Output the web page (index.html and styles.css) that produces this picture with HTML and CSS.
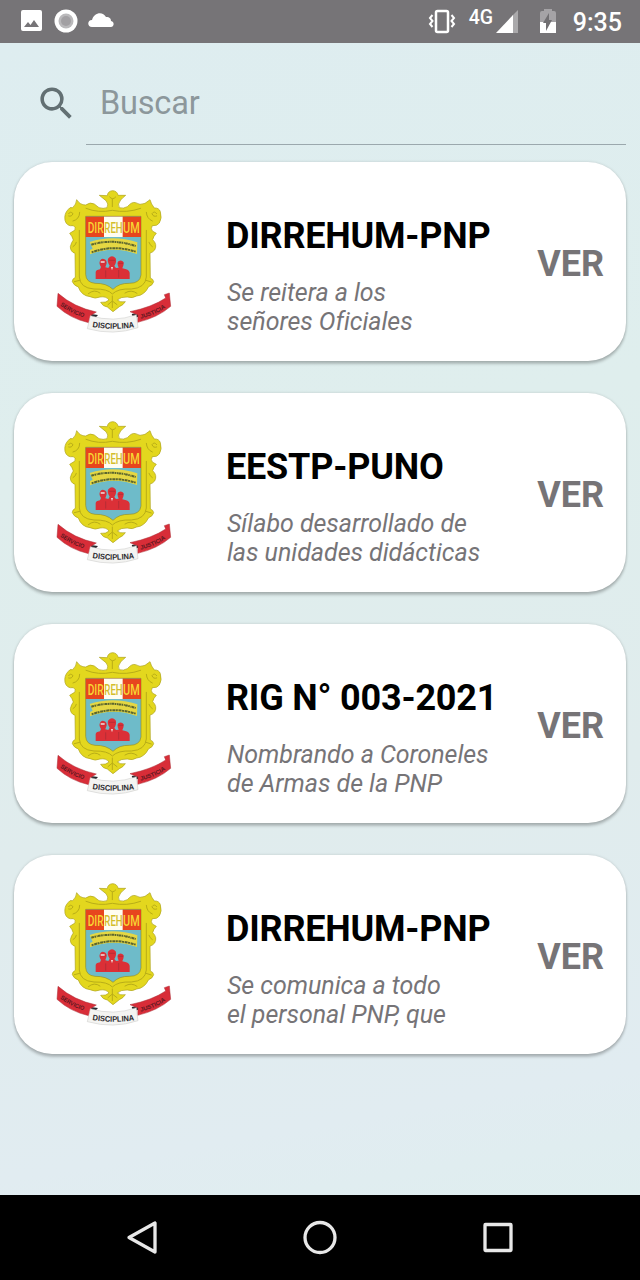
FILE: index.html
```html
<!DOCTYPE html>
<html lang="es">
<head>
    <meta charset="UTF-8">
    <meta name="viewport" content="width=device-width, initial-scale=1.0">
    <title>DIRREHUM</title>
    <link rel="stylesheet" href="styles.css">
</head>
<body>
    <header class="status-bar">
        <svg class="status-left" width="120" height="42" viewBox="0 0 120 42">
            <path fill="#fff" fill-rule="evenodd" d="M23 10 H40 Q42 10 42 12 V29 Q42 31 40 31 H23 Q21 31 21 29 V12 Q21 10 23 10 Z M24 27 H39 L34 20 L30.5 25 L28 22 Z"/>
            <circle cx="66" cy="21" r="11.5" fill="#fff"/>
            <circle cx="66" cy="21" r="7.5" fill="#bab9bb"/>
            <circle cx="66" cy="21" r="5" fill="#a2a0a3"/>
            <path fill="#fff" d="M92 27 C87 27 87 20 92 20 C94 12 103 11 106 17 C110 17 111 19 111 21 C115 22 114 27 111 27 Z"/>
        </svg>
        <div class="status-right">
            <svg width="28" height="42" viewBox="0 0 28 42" fill="none" stroke="#fff" stroke-width="2">
                <rect x="8" y="11" width="12" height="21" rx="1.5" stroke-width="2.5"/>
                <path d="M4.500 15 L2 18 L4.500 21 L2 24 L4.500 27 M23.500 15 L26 18 L23.500 21 L26 24 L23.500 27"/>
            </svg>
            <span class="network">4G</span>
            <svg width="22" height="42" viewBox="0 0 22 42">
                <path fill="#aaa9ab" d="M22 10 V33 H16 V16 Z"/>
                <path fill="#fff" d="M0 33 L17 15 V33 Z"/>
            </svg>
            <svg class="battery" width="16" height="42" viewBox="0 0 16 42">
                <path fill="#a5a3a6" d="M0 13 Q0 11 2 11 H4 V9 H12 V11 H14 Q16 11 16 13 V23 H0 Z"/>
                <path fill="#fff" d="M0 22 H16 V33 H0 Z"/>
                <path fill="#716f72" d="M9 13 V20 H12 L6 31 V23 H3 Z"/>
            </svg>
            <span class="clock">9:35</span>
        </div>
    </header>

    <main class="content">
        <div class="search">
            <svg class="search-icon" width="43" height="43" viewBox="0 0 24 24">
                <path d="M15.5 14h-.79l-.28-.27A6.471 6.471 0 0 0 16 9.5 6.5 6.5 0 1 0 9.5 16c1.61 0 3.09-.59 4.23-1.57l.27.28v.79l5 4.99L20.49 19l-4.99-5zm-6 0C7.01 14 5 11.99 5 9.5S7.01 5 9.5 5 14 7.01 14 9.5 11.99 14 9.5 14z"/>
            </svg>
            <input class="search-input" type="text" placeholder="Buscar">
        </div>

        <div class="card-list">
            <article class="card">
                <svg class="logo" viewBox="0 0 450 480">
                    <!-- Crest, reused by the other cards -->
                    <g id="escudo">
                        <path fill="#e3d71e" stroke="#aaa018" stroke-width="2" stroke-linejoin="round" d="M217 29 C227 29 234 36 234 43 L257 43 Q247 51 242 57 Q231 70 238 80 Q250 84 262 77 Q276 61 287 65 Q299 74 315 67 L330 56 Q333 69 343 81 Q357 80 361 92 Q367 112 358 126 Q351 136 337 134 Q331 143 337 150 L349 157 Q340 166 338 176 Q353 190 344 207 Q337 215 330 216 L331 291 Q340 294 341 302 Q338 313 326 317 Q313 343 290 345 Q277 353 262 348 Q242 347 232 357 Q240 365 256 362 Q250 372 238 377 L219 392 L202 378 Q188 376 182 364 Q198 366 207 357 Q199 345 180 348 Q166 355 150 347 Q124 344 115 318 Q102 314 97 302 Q96 294 106 289 L105 217 Q91 212 91 197 Q94 184 100 177 Q97 166 89 157 L105 147 Q108 138 100 134 Q80 137 75 118 Q72 98 84 86 Q89 77 98 80 Q109 70 110 56 Q120 72 137 72 Q151 62 163 69 L177 80 Q190 84 201 80 Q207 69 198 59 L178 43 L202 44 Q203 31 217 29 Z"/>
                        <g fill="none" stroke="#b8ad18" stroke-width="3" stroke-linecap="round">
                            <path d="M138 82 Q175 97 217 88 Q260 97 302 82"/>
                            <path d="M86 98 Q91 89 99 98 Q95 108 86 105 M99 120 Q119 115 119 94 M350 98 Q343 88 336 98 Q340 109 350 105 M337 120 Q320 113 319 94"/>
                            <path d="M118 148 V288 Q120 321 162 324 Q203 323 217 339 Q234 322 274 324 Q316 321 319 288 V148"/>
                            <path d="M145 338 Q163 323 180 336 M255 336 Q274 324 291 337 M217 345 V380 M204 371 L217 360 L231 371"/>
                            <path d="M209 48 Q218 59 227 48 M217 55 V77 M99 197 Q108 192 109 184 M337 197 Q329 192 327 184 M103 302 L119 298 M334 303 L318 298"/>
                        </g>
                        <path fill="#6ebbc9" stroke="#948e27" stroke-width="2" d="M137 106 H303 V282 Q300 307 268 307 Q237 306 219 325 Q199 306 165 307 Q138 304 137 280 Z"/>
                        <rect x="137" y="107" width="166" height="61" fill="#e7451e"/>
                        <rect x="192" y="107" width="56" height="61" fill="#fffdf0"/>
                        <g class="escudo-name">
                            <text x="143" y="155" textLength="48" lengthAdjust="spacingAndGlyphs" fill="#f7d633">DIR</text>
                            <text x="193" y="155" textLength="55" lengthAdjust="spacingAndGlyphs" fill="#d3bd2b">REH</text>
                            <text x="249" y="155" textLength="50" lengthAdjust="spacingAndGlyphs" fill="#f7d633">UM</text>
                        </g>
                        <path fill="#e5d743" d="M149 183 Q219 160 292 184 L291 219 Q219 193 150 220 L150 207 L158 203 Z"/>
                        <g fill="none" stroke="#5c662e" stroke-width="6">
                            <path stroke-dasharray="8 1.5 5 2 3 1" d="M154 191 Q219 172 287 195"/>
                            <path stroke-dasharray="6 2 9 1.5" d="M155 214 Q219 190 287 212"/>
                        </g>
                        <path fill="#db3037" d="M167 294 V274 Q167 267 180 265 L183 258 Q176 247 180 239 Q184 232 191 234 Q201 236 200 247 L196 259 L205 261 L209 254 Q200 241 205 232 Q216 219 227 232 Q231 243 223 255 L228 261 L236 260 Q229 244 236 240 Q245 235 251 244 Q252 253 247 262 Q267 265 269 275 V294 Z"/>
                        <path fill="none" stroke="#a62c35" stroke-width="2" d="M181 245 H197 M207 238 H225 M235 247 H250 M197 268 V290 M236 267 V290"/>
                        <path fill="#f1e5e3" d="M182 241 H194 V245 H182 Z M213 258 H219 L216 268 Z"/>
                        <path fill="#24262c" d="M152 399 L174 402 L163 414 L146 408 Z M275 399 L296 395 L298 407 L280 410 Z"/>
                        <path fill="#d82d38" stroke="#a82a32" stroke-width="1.5" d="M54 337 Q102 379 169 393 L153 403 L157 414 L146 425 Q91 413 51 376 Z"/>
                        <path fill="#d82d38" stroke="#a82a32" stroke-width="1.5" d="M270 392 Q337 378 377 351 L373 341 L388 336 L392 376 Q353 410 293 424 L294 402 Z"/>
                        <path fill="#f4f4f2" stroke="#c6c6c4" stroke-width="1.5" d="M151 404 Q220 426 289 401 L294 440 Q220 465 142 443 Z"/>
                        <path id="ribbonLeft" fill="none" d="M60 373 Q99 402 145 413"/>
                        <path id="ribbonMiddle" fill="none" d="M157 438 Q220 449 288 438"/>
                        <path id="ribbonRight" fill="none" d="M302 413 Q349 402 390 371"/>
                        <g class="escudo-motto">
                            <text class="motto-side"><textPath href="#ribbonLeft" textLength="80" lengthAdjust="spacingAndGlyphs">SERVICIO</textPath></text>
                            <text class="motto-main"><textPath href="#ribbonMiddle" textLength="127" lengthAdjust="spacingAndGlyphs">DISCIPLINA</textPath></text>
                            <text class="motto-side"><textPath href="#ribbonRight" textLength="82" lengthAdjust="spacingAndGlyphs">JUSTICIA</textPath></text>
                        </g>
                    </g>
                </svg>
                <div class="card-text">
                    <h2>DIRREHUM-PNP</h2>
                    <p>Se reitera a los<br>señores Oficiales</p>
                </div>
                <a class="ver">VER</a>
            </article>
            <article class="card">
                <svg class="logo" viewBox="0 0 450 480"><use href="#escudo"/></svg>
                <div class="card-text">
                    <h2>EESTP-PUNO</h2>
                    <p>Sílabo desarrollado de<br>las unidades didácticas</p>
                </div>
                <a class="ver">VER</a>
            </article>
            <article class="card">
                <svg class="logo" viewBox="0 0 450 480"><use href="#escudo"/></svg>
                <div class="card-text">
                    <h2>RIG N° 003-2021</h2>
                    <p>Nombrando a Coroneles<br>de Armas de la PNP</p>
                </div>
                <a class="ver">VER</a>
            </article>
            <article class="card">
                <svg class="logo" viewBox="0 0 450 480"><use href="#escudo"/></svg>
                <div class="card-text">
                    <h2>DIRREHUM-PNP</h2>
                    <p>Se comunica a todo<br>el personal PNP, que</p>
                </div>
                <a class="ver">VER</a>
            </article>
        </div>
    </main>

    <nav class="nav-bar">
        <svg width="36" height="36" viewBox="0 0 36 36"><path d="M31 3 V32 L5 17.5 Z"/></svg>
        <svg width="36" height="36" viewBox="0 0 36 36"><circle cx="18" cy="17.5" r="15"/></svg>
        <svg width="36" height="36" viewBox="0 0 36 36"><rect x="5" y="4.5" width="26" height="26" rx="0.5"/></svg>
    </nav>
</body>
</html>
```
FILE: styles.css
```css
* {
    box-sizing: border-box;
}
body {
    margin: 0;
    height: 1280px;
    display: flex;
    flex-direction: column;
    font-family: Roboto, sans-serif;
    background-color: #dfedee;
    overflow: hidden;
}
.status-bar {
    display: flex;
    justify-content: space-between;
    height: 42.5px;
    flex: none;
    background: #767477;
    color: white;
}
.status-right {
    display: flex;
    padding-right: 18px;
}
.network {
    width: 27px;
    margin: 7px 0 0 13px;
    font-size: 19.5px;
    line-height: 21px;
    font-weight: 500;
}
.battery {
    margin-left: 22px;
}
.clock {
    margin-left: 17px;
    font-size: 25px;
    line-height: 46px;
    font-weight: 500;
}
.content {
    flex: 1;
    background: linear-gradient(170deg, #deedf0, #dfeeed 35%, #e0eced 65%, #e1ecf1 90%, #dfeeef);
}
.search {
    display: flex;
    align-items: flex-start;
    height: 119.5px;
    padding: 36.5px 14px 0 35px;
}
.search-icon {
    flex: none;
    margin-top: 2.5px;
    fill: #637073;
}
.search-input {
    flex: 1;
    height: 66px;
    margin-left: 8px;
    padding: 0 14px 17px;
    border: none;
    border-bottom: 1px solid #9ba8ad;
    background: none;
    font-family: inherit;
    font-size: 32.5px;
    letter-spacing: -0.2px;
    outline: none;
}
.search-input::placeholder {
    color: #8c979b;
    opacity: 1;
}
.card-list {
    display: grid;
    gap: 32px;
    padding: 0 14px;
}
.card {
    display: flex;
    height: 199px;
    background: white;
    border-radius: 38px;
    box-shadow: 0 3px 3px rgba(0,0,0,0.22), 0 0 3px rgba(0,0,0,0.15);
}
.logo {
    width: 150px;
    height: 160px;
    margin: 18.5px 0 0 26px;
}
.escudo-name {
    font-size: 44px;
    font-weight: 500;
}
.escudo-motto {
    font-family: "Liberation Sans", sans-serif;
    font-weight: bold;
}
.motto-side {
    font-size: 18px;
    fill: #5c1820;
}
.motto-main {
    font-size: 24px;
    fill: #2b2b2f;
}
.card-text {
    flex: 1;
    padding: 52.5px 0 0 36px;
    white-space: nowrap;
}
.card-text h2 {
    margin: 0;
    font-size: 36px;
    line-height: 42px;
    letter-spacing: -0.2px;
    color: black;
}
.card-text p {
    margin: 21px 0 0 1px;
    font-size: 25px;
    line-height: 29px;
    letter-spacing: -0.03px;
    font-style: italic;
    color: #767477;
}
.ver {
    align-self: center;
    margin: 5px 22px 0 0;
    font-size: 36px;
    line-height: 42px;
    font-weight: bold;
    color: #767477;
}
.nav-bar {
    display: flex;
    justify-content: center;
    align-items: center;
    gap: 142px;
    height: 85.5px;
    padding-top: 1px;
    flex: none;
    background: black;
}
.nav-bar svg {
    fill: none;
    stroke: #e8e8e8;
    stroke-width: 3.3;
    stroke-linejoin: round;
}
```
